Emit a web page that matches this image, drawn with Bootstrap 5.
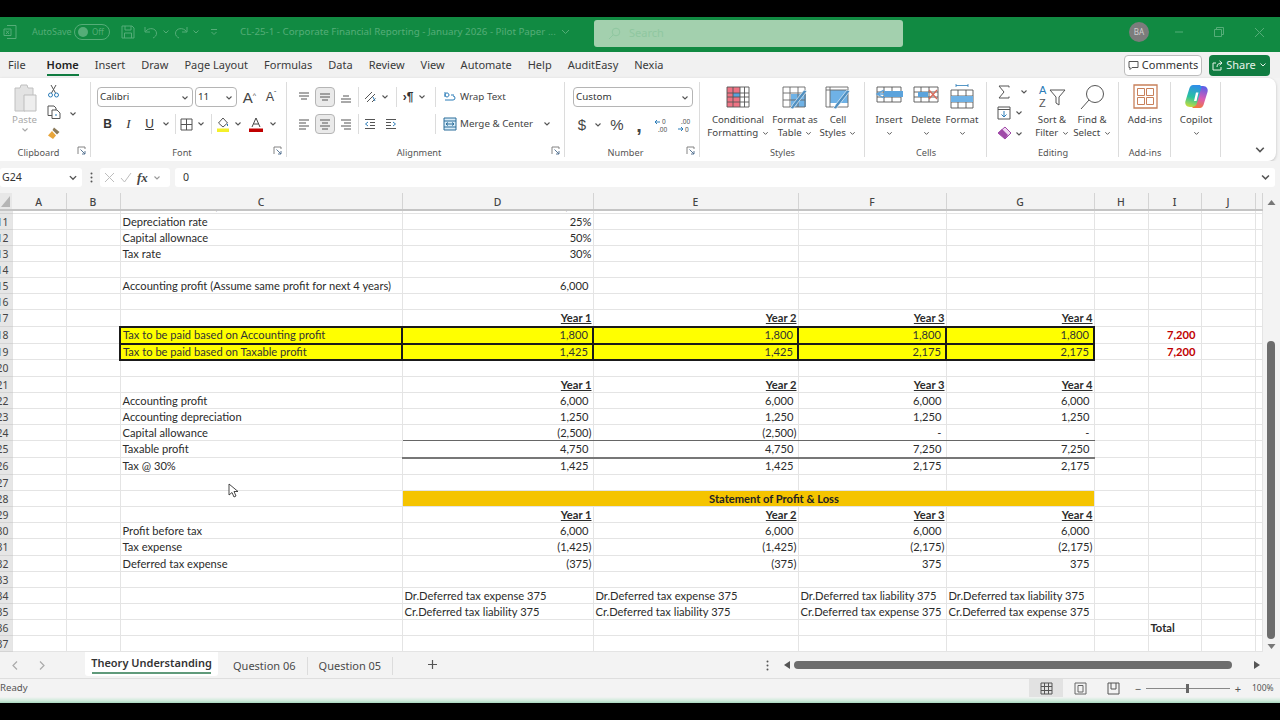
<!DOCTYPE html>
<html lang="en">
<head>
<meta charset="UTF-8">
<meta name="viewport" content="width=device-width, initial-scale=1.0">
<title>Corporate Financial Reporting - Excel</title>
<link href="https://cdn.jsdelivr.net/npm/bootstrap@5.3.3/dist/css/bootstrap.min.css" rel="stylesheet">
<style>
html, body { height: 720px; overflow: hidden; background: #000; }
body { font-family: "Noto Sans", "Liberation Sans", sans-serif; font-size: 11px; color: #333; }
.app { width: 1280px; height: 720px; display: flex; flex-direction: column; background: #f3f3f3; }
.topblack { height: 17px; background: #000; flex: none; }
.botblack { height: 17px; background: #000; flex: none; }
svg { display: block; }

/* title bar */
.titlebar { height: 35px; flex: none; background: #118a42; color: #55ad78; display: flex; align-items: center; padding-bottom: 5px; font-size: 10px; }
.tb-cell { display: flex; align-items: center; justify-content: center; flex: none; }
.tb-icon { width: 20px; margin-left: 0; }
.tb-auto { width: 35px; margin-left: 12px; font-size: 9px; white-space: nowrap; justify-content: flex-start; }
.toggle { width: 36px; height: 16px; margin-left: 7px; border: 1px solid #55ad78; border-radius: 9px; display: flex; align-items: center; gap: 4px; padding-left: 3px; font-size: 8px; flex: none; }
.toggle i { width: 10px; height: 10px; background: #55ad78; border-radius: 50%; display: block; }
.tb-save { width: 18px; margin-left: 9px; }
.tb-undo { width: 18px; margin-left: 5px; }
.tb-ch { width: 12px; }
.tb-redo { width: 18px; margin-left: 0; }
.tb-cust { width: 12px; margin-left: 6px; }
.tb-title { margin-left: 20px; width: 332px; font-size: 9.76px; white-space: nowrap; justify-content: flex-start; }
.searchbox { width: 309px; height: 27px; margin-left: 22px; margin-top: 2px; background: #a3d0ae; border-radius: 3px; display: flex; align-items: center; gap: 8px; padding-left: 14px; color: #8fc7a0; font-size: 11px; flex: none; }
.avatar { width: 20px; height: 20px; border-radius: 50%; background: #7c7c7c; color: #cfcfcf; font-size: 8px; display: flex; align-items: center; justify-content: center; margin-left: 226px; flex: none; }
.win { width: 40px; }
.win-first { margin-left: 10px; }

/* tabs */
.tabrow { height: 26px; flex: none; background: #f1f1f1; display: flex; align-items: center; padding-left: 8px; font-size: 11px; color: #3a3a3a; }
.tabrow .tabitem { margin-right: 16px; white-space: nowrap; }
.tabitem.on { font-weight: 600; color: #222; position: relative; }
.tabitem.on::after { content: ""; position: absolute; left: 0; right: 0; bottom: -3px; height: 2px; background: #107c41; }
.tabrow .tab-first { margin-right: 21px; }
.cmtbtn { margin-left: auto; height: 21px; width: 78px; background: #fff; border: 1px solid #bdbdbd; border-radius: 4px; display: flex; align-items: center; justify-content: center; gap: 3px; font-size: 11px; color: #333; }
.sharebtn { margin-left: 7px; margin-right: 10px; height: 21px; width: 61px; background: #107c41; border-radius: 4px; color: #e6f3ea; display: flex; align-items: center; justify-content: center; gap: 3px; font-size: 11px; }

/* ribbon */
.ribbon { height: 83px; flex: none; background: #fff; margin-right: 4px; border-radius: 0 8px 8px 0; box-shadow: 0 1px 3px rgba(0,0,0,.22); display: flex; color: #444; font-size: 9.7px; }
.rgroup { height: 100%; display: flex; flex-direction: column; flex: none; position: relative; }
.rgroup::after { content: ""; position: absolute; right: 0; top: 4px; bottom: 4px; width: 1px; background: #dcdcdc; }
.rbody { flex: 1; display: flex; min-height: 0; }
.rfoot { height: 15px; display: flex; align-items: flex-start; flex: none; font-size: 9.2px; color: #555; line-height: 13px; }
.rfoot span { flex: 1; text-align: center; }
.rfoot b { width: 14px; display: block; }
.g-clip { width: 91px; } .g-font { width: 196px; } .g-align { width: 278px; } .g-num { width: 135px; }
.g-style { width: 165px; } .g-cell { width: 122px; } .g-edit { width: 132px; } .g-add { width: 52px; } .g-copi { width: 50px; }
.g-rest { flex: 1; display: flex; align-items: flex-end; justify-content: flex-end; padding: 0 10px 5px 0; }
.smallcol { display: flex; flex-direction: column; padding-top: 9px; gap: 7px; }
.srow { display: grid; height: 20px; align-items: center; justify-items: center; }
.vsep { width: 1px; height: 20px; background: #dcdcdc; }
.selbox { height: 20px; border: 1px solid #b5b5b5; border-radius: 4px; background: #fff; display: flex; align-items: center; justify-content: space-between; padding: 1px 3px 0 2px; font-size: 9.8px; color: #333; width: 100%; }
.boxed { width: 20px; height: 20px; background: #eaeaea; border: 1px solid #b5b5b5; border-radius: 4px; display: flex; align-items: center; justify-content: center; }
.fr1 { grid-template-columns: 96px 2px 42px 6px 13px 9px 12px; }
.fr2 { grid-template-columns: 21px 21px 21px 12px 6px 16px 14px 6px 18px 12px 24px 10px; }
.ar1 { grid-template-columns: 21px 22px 20px 4px 20px 10px 12px 12px 16px 10px 20px auto; }
.ar2 { grid-template-columns: 21px 22px 20px 4px 20px 21px 29px 10px 20px 78px 18px; }
.nr1 { grid-template-columns: 120px; }
.nr2 { grid-template-columns: 18px 14px 24px 20px 25px 20px; }
.pad-font { padding-left: 6px; } .pad-num { padding-left: 8px; }
.txt-left { justify-self: start; white-space: nowrap; font-size: 9.8px; color: #444; padding-top: 1px; }
.glyph-b { font-weight: 700; font-family: "Liberation Sans", sans-serif; font-size: 12px; color: #333; }
.glyph-i { font-style: italic; font-family: "Liberation Serif", serif; font-size: 13px; color: #333; }
.glyph-u { text-decoration: underline; font-family: "Liberation Sans", sans-serif; font-size: 12px; color: #333; }
.glyph-aa { font-family: "Liberation Sans", sans-serif; font-size: 15px; color: #444; line-height: 1; white-space: nowrap; }
.glyph-aa sup { font-size: 7px; top: -.7em; }
.glyph-a2 { font-size: 12.5px; }
.glyph-sym { font-family: "Liberation Sans", sans-serif; font-size: 15px; color: #444; }
.glyph-cm { font-family: "Liberation Sans", sans-serif; font-size: 20px; font-weight: 700; color: #444; line-height: 10px; }
.bigbtn { display: flex; flex-direction: column; align-items: center; padding-top: 6px; white-space: nowrap; line-height: 13px; text-align: center; flex: none; }
.bigbtn .ic { height: 29px; display: flex; align-items: flex-start; justify-content: center; }
.b-cf, .b-ft, .b-cs { padding-top: 8px; }
.b-cf .ic, .b-ft .ic, .b-cs .ic { height: 27px; }
.b-cf { width: 76px; } .b-ft { width: 38px; } .b-cs { width: 48px; }
.b-ins { width: 48px; } .b-del { width: 26px; } .b-fmt { width: 46px; }
.b-sort { width: 32px; } .b-find { width: 48px; }
.b-add { width: 52px; } .b-cop { width: 50px; }
.paste { width: 46px; color: #a8a8a8; padding-left: 3px; }
.clipcol { display: flex; flex-direction: column; gap: 7px; padding-top: 6px; width: 15px; align-items: center; }
.editcol { width: 49px; display: grid; grid-template-columns: 34px 12px; grid-auto-rows: 21px; padding-top: 3px; align-items: center; justify-items: center; }
.ch-a { margin-left: -6px; }
.ch-b { margin-left: -16px; }
.chev-inline { display: inline-block; vertical-align: middle; margin-left: 1px; }

/* formula bar */
.fbar { height: 32px; flex: none; background: #f3f3f3; display: flex; align-items: flex-start; padding-top: 7px; font-size: 10.6px; color: #333; }
.namebox { width: 82px; height: 19px; background: #fff; border-radius: 3px; display: flex; align-items: center; justify-content: space-between; padding: 0 4px 0 2px; flex: none; }
.dots3 { width: 18px; height: 19px; display: flex; align-items: center; justify-content: center; flex: none; }
.fxbox { width: 70px; height: 19px; background: #fff; border-radius: 3px; display: flex; align-items: center; gap: 5px; padding-left: 4px; flex: none; }
.fx { font-family: "Liberation Serif", serif; font-style: italic; font-size: 13px; font-weight: 700; color: #444; }
.fxinput { width: 1100px; height: 19px; margin-left: 5px; background: #fff; border-radius: 3px; display: flex; align-items: center; justify-content: space-between; padding: 0 4px 0 8px; flex: none; }

/* sheet */
.sheetwrap { height: 459px; flex: none; display: flex; background: #f3f3f3; position: relative; overflow: hidden; }
.sheetgrid { table-layout: fixed; border-collapse: collapse; width: 1262px; background: #fff; font-family: "Lato", "Liberation Sans", sans-serif; font-size: 11.15px; color: #2b2b2b; flex: none; align-self: flex-start; }
.c-rh { width: 12px; } .c-ab { width: 54px; } .c-c { width: 282px; } .c-d { width: 191px; } .c-e { width: 205px; } .c-f { width: 148px; } .c-i { width: 53px; } .c-k { width: 7px; }
.sheetgrid th.ch { height: 16px; background: #f3f3f3; font-weight: 500; text-align: center; color: #444; border-right: 1px solid #d4d4d4; border-bottom: 2px solid #c4c4c4; padding: 2px 0 0; font-size: 10.4px; line-height: 13px; font-family: "Noto Sans", sans-serif; }
.sheetgrid th.corner { background: #e8e8e8; border-bottom: 2px solid #c4c4c4; padding: 0; }
.sheetgrid td { height: 16px; padding: 0 2px; border: 1px solid #e4e4e4; white-space: nowrap; overflow: hidden; line-height: 14px; }
.sheetgrid td.rh { background: #e6e6e6; direction: rtl; text-align: right; padding: 0 3px 0 0; border: 0; border-bottom: 1px solid #d4d4d4; font-family: "Noto Sans", sans-serif; font-size: 10.4px; color: #444; }
.sheetgrid tr.tall td { height: 17px; }
.sheetgrid tr.sliver td { height: 3px; padding: 0; line-height: 0; border-top: 0; }
.clipped { height: 2px; overflow: hidden; display: flex; align-items: flex-end; justify-content: flex-end; padding-right: 5px; line-height: 14px; }
.clipped-c { padding-right: 0; justify-content: flex-start; padding-left: 95px; }
.sheetgrid td.r { text-align: right; padding-right: 1px; }
.sheetgrid td.n { text-align: right; padding-right: 4px; }
.sheetgrid td.yr { text-align: right; font-weight: 700; text-decoration: underline; padding-right: 1px; }
.sheetgrid td.hl { background: #ffff00; border: 2px solid #1a1a1a; color: #333; }
.sheetgrid td.red { text-align: right; font-weight: 700; color: #c00000; padding-right: 5px; }
.sheetgrid td.u1 { border-bottom: 1px solid #666; }
.sheetgrid td.u2 { border-bottom: 2px solid #777; }
.sheetgrid td.bar28 { background: #f5c400; font-weight: 700; text-align: center; padding-left: 54px; color: #222; }
.totalcell { font-weight: 700; }
.vscroll { flex: 1; display: flex; flex-direction: column; align-items: center; padding-top: 6px; background: #f3f3f3; }
.vthumb { width: 8px; height: 298px; margin-top: 135px; background: #6d6d6d; border-radius: 4px; }
.vspace { flex: 1; }
.vscroll svg:last-child { margin-bottom: 2px; }
.cursor { position: absolute; left: 228px; top: 290px; }

/* sheet tabs */
.sheetbar { height: 27px; flex: none; background: #f3f3f3; border-bottom: 1px solid #dedede; display: flex; align-items: flex-start; font-size: 11px; color: #4a4a4a; }
.snav { width: 27px; height: 26px; display: flex; align-items: center; justify-content: center; flex: none; }
.snav-first { margin-left: 1px; }
.stab-on { margin-left: 30px; width: 133px; height: 24px; background: #fff; border-radius: 0 0 3px 3px; font-weight: 600; color: #333; display: flex; justify-content: center; position: relative; flex: none; padding-top: 3px; white-space: nowrap; }
.stab-on::after { content: ""; position: absolute; left: 7px; right: 7px; bottom: 2px; height: 2px; background: #5f9a7a; }
.stab { height: 18px; margin-top: 5px; padding: 0 11px 0 15px; border-right: 1px solid #dcdcdc; white-space: nowrap; line-height: 17px; flex: none; }
.stab-2 { padding-left: 11px; }
.addsheet { margin-left: 33px; margin-top: 6px; flex: none; }
.hdots { margin-left: 327px; margin-top: 8px; flex: none; }
.harrow { margin-top: 9px; flex: none; }
.harrow-l { margin-left: 15px; }
.hthumb { width: 438px; height: 8px; background: #6d6d6d; border-radius: 4px; margin: 9px 0 0 4px; flex: none; }
.harrow-r { margin-left: 22px; }

/* status */
.statusbar { height: 18px; flex: none; background: #f3f3f3; display: flex; align-items: center; font-size: 9.6px; color: #555; }
.viewbtn { width: 34px; height: 18px; display: flex; align-items: center; justify-content: center; flex: none; }
.viewbtn.on { background: #e2e2e2; margin-left: auto; }
.viewbtn.lastview { margin-right: 4px; width: 33px; }
.zoomtrack { width: 84px; height: 1px; background: #888; margin: 0 4px; position: relative; flex: none; }
.zoomtrack i { position: absolute; left: 40px; top: -4px; width: 3px; height: 9px; background: #666; display: block; }
.zoombtn { width: 8px; text-align: center; font-size: 11px; flex: none; line-height: 1; }
.zoompct { margin-left: 10px; margin-right: 8px; width: 20px; font-size: 8.5px; flex: none; white-space: nowrap; }
.tealline { height: 6px; flex: none; background: linear-gradient(#f3f3f3, #cfeadb 60%, #a9d8bf); }
</style>
</head>
<body>
<svg width="0" height="0" class="position-absolute">
  <defs>
    <symbol id="chev" viewBox="0 0 8 8"><path d="M1.5 2.5 4 5l2.5-2.5" fill="none" stroke="#555" stroke-width="1.1"/></symbol>
    <symbol id="launch" viewBox="0 0 9 9"><path d="M1 8V1h7v2" fill="none" stroke="#777" stroke-width=".9"/><path d="M3.5 3.5 8 8M5 8h3V5" fill="none" stroke="#4a6a8a" stroke-width=".9"/></symbol>
    <symbol id="lines-top" viewBox="0 0 14 14"><path d="M2 3h10M2 6h10M4 9h6" stroke="#555" stroke-width="1.1"/></symbol>
    <symbol id="lines-mid" viewBox="0 0 14 14"><path d="M2 4h10M2 7h10M4 10h6" stroke="#555" stroke-width="1.1"/></symbol>
    <symbol id="lines-bot" viewBox="0 0 14 14"><path d="M4 6h6M2 9h10M2 12h10" stroke="#555" stroke-width="1.1"/></symbol>
    <symbol id="al-left" viewBox="0 0 14 14"><path d="M2 3h10M2 6h7M2 9h10M2 12h7" stroke="#555" stroke-width="1.1"/></symbol>
    <symbol id="al-center" viewBox="0 0 14 14"><path d="M2 3h10M4 6h6M2 9h10M4 12h6" stroke="#555" stroke-width="1.1"/></symbol>
    <symbol id="al-right" viewBox="0 0 14 14"><path d="M2 3h10M5 6h7M2 9h10M5 12h7" stroke="#555" stroke-width="1.1"/></symbol>
  </defs>
</svg>
<div class="app">
  <div class="topblack"></div>

  <div class="titlebar">
    <div class="tb-cell tb-icon"><svg width="14" height="16" viewBox="0 0 14 16"><path d="M4 1.500h9v13H4M1 5h7v6.500H1z" fill="none" stroke="#55ad78"/><path d="M3 6.500l3 3.500M6 6.500l-3 3.500" stroke="#55ad78"/></svg></div>
    <div class="tb-cell tb-auto">AutoSave</div>
    <div class="toggle"><i></i>Off</div>
    <div class="tb-cell tb-save"><svg width="14" height="14" viewBox="0 0 14 14"><path d="M1 1h10l2 2v10H1zM4 1v4h6V1M3.500 13V8h7v5" fill="none" stroke="#55ad78"/></svg></div>
    <div class="tb-cell tb-undo"><svg width="14" height="14" viewBox="0 0 14 14"><path d="M1 2v5h5M1.500 6.500C5 2 12 3 12.500 8c.2 2.500-1.500 4-3.500 5" fill="none" stroke="#55ad78"/></svg></div>
    <div class="tb-cell tb-ch"><svg width="8" height="8"><path d="M1.500 2.500 4 5l2.500-2.500" fill="none" stroke="#55ad78"/></svg></div>
    <div class="tb-cell tb-redo"><svg width="14" height="14" viewBox="0 0 14 14"><path d="M13 2v5H8M12.500 6.500C9 2 2 3 1.500 8c-.2 2.500 1.500 4 3.500 5" fill="none" stroke="#55ad78"/></svg></div>
    <div class="tb-cell tb-ch"><svg width="8" height="8"><path d="M1.500 2.500 4 5l2.500-2.500" fill="none" stroke="#55ad78"/></svg></div>
    <div class="tb-cell tb-cust"><svg width="8" height="8"><path d="M1 1.500h6M1.500 4 4 6.500 6.500 4" fill="none" stroke="#55ad78"/></svg></div>
    <div class="tb-cell tb-title">CL-25-1 - Corporate Financial Reporting - January 2026 - Pilot Paper ...&nbsp;&nbsp;<svg width="9" height="9"><path d="M1 3l3.500 3.500L8 3" fill="none" stroke="#55ad78"/></svg></div>
    <div class="searchbox"><svg width="13" height="13" viewBox="0 0 13 13"><circle cx="8" cy="5" r="3.800" fill="none" stroke="#8fc7a0"/><path d="M5 8l-4 4" stroke="#8fc7a0"/></svg>Search</div>
    <div class="avatar">BA</div>
    <div class="tb-cell win win-first"><svg width="10" height="10"><path d="M1 5h8" stroke="#55ad78"/></svg></div>
    <div class="tb-cell win"><svg width="10" height="10"><path d="M.5 2.500h7v7h-7zM2.500 2.500v-2h7v7h-2" fill="none" stroke="#55ad78"/></svg></div>
    <div class="tb-cell win"><svg width="11" height="11"><path d="M1 1l9 9M10 1l-9 9" stroke="#55ad78"/></svg></div>
  </div>

  <div class="tabrow">
    <div class="tabitem tab-first">File</div>
    <div class="tabitem on">Home</div>
    <div class="tabitem">Insert</div>
    <div class="tabitem">Draw</div>
    <div class="tabitem">Page Layout</div>
    <div class="tabitem">Formulas</div>
    <div class="tabitem">Data</div>
    <div class="tabitem">Review</div>
    <div class="tabitem">View</div>
    <div class="tabitem">Automate</div>
    <div class="tabitem">Help</div>
    <div class="tabitem">AuditEasy</div>
    <div class="tabitem">Nexia</div>
    <div class="cmtbtn"><svg width="11" height="11" viewBox="0 0 11 11"><path d="M1 1.500h9v6H4L2 9.500v-2H1z" fill="none" stroke="#555"/></svg>Comments</div>
    <div class="sharebtn"><svg width="11" height="11" viewBox="0 0 11 11"><path d="M4 3H1v7h8V7M5 7c0-3 2-4 5-4M7.500 .8 10 3 7.500 5.200" fill="none" stroke="#e6f3ea"/></svg>Share<svg width="8" height="8"><path d="M1.500 2.500 4 5l2.500-2.500" fill="none" stroke="#e6f3ea"/></svg></div>
  </div>

  <div class="ribbon">
    <div class="rgroup g-clip">
      <div class="rbody">
        <div class="bigbtn paste">
          <div class="ic"><svg width="26" height="30" viewBox="0 0 26 30"><path d="M3 4h5l1-3h6l1 3h5v8h-8v15H3z" fill="#e3e3e3" stroke="#c0c0c0"/><path d="M12 11h12v16H12z" fill="#eee" stroke="#bdbdbd"/></svg></div>
          <div>Paste</div>
          <svg width="8" height="8"><use href="#chev" opacity=".5"/></svg>
        </div>
        <div class="clipcol">
          <svg width="13" height="14" viewBox="0 0 13 14"><path d="M4 1l4.500 8M9 1 4.500 9" stroke="#555" fill="none"/><circle cx="3.500" cy="11" r="2" fill="none" stroke="#2b7cb8"/><circle cx="9.500" cy="11" r="2" fill="none" stroke="#2b7cb8"/></svg>
          <svg width="14" height="14" viewBox="0 0 14 14"><path d="M5 10.500H1V1h6l2 2v2M5 5h5l3 3v5.500H5z" fill="#fff" stroke="#555"/><path d="M8 10h2" stroke="#2b7cb8"/></svg>
          <svg width="14" height="14" viewBox="0 0 14 14"><path d="M7 1.500 12.500 6 10 8.500 5.500 4z" fill="#8a7a5a"/><path d="M5 5 9 9.500 6 13 1 9.500z" fill="#e8a53a"/></svg>
        </div>
        <div class="ps-2 pt-4 mt-2"><svg width="8" height="8"><use href="#chev"/></svg></div>
      </div>
      <div class="rfoot"><span>Clipboard</span><b><svg width="9" height="9"><use href="#launch"/></svg></b></div>
    </div>

    <div class="rgroup g-font">
      <div class="rbody pad-font">
        <div class="smallcol">
          <div class="srow fr1">
            <div class="selbox"><span>Calibri</span><svg width="8" height="8"><use href="#chev"/></svg></div><i></i>
            <div class="selbox"><span>11</span><svg width="8" height="8"><use href="#chev"/></svg></div><i></i>
            <span class="glyph-aa">A<sup>^</sup></span><i></i>
            <span class="glyph-aa glyph-a2">A<sup>ˇ</sup></span>
          </div>
          <div class="srow fr2">
            <span class="glyph-b">B</span><span class="glyph-i">I</span><span class="glyph-u">U</span>
            <svg width="8" height="8"><use href="#chev"/></svg><span class="vsep"></span>
            <svg width="13" height="13" viewBox="0 0 13 13"><path d="M1 1h11v11H1zM6.500 1v11M1 6.500h11" fill="none" stroke="#555"/></svg>
            <svg width="8" height="8"><use href="#chev"/></svg><span class="vsep"></span>
            <svg width="14" height="15" viewBox="0 0 14 15"><path d="M7 1 2.500 6 7 10l4.500-4z" fill="none" stroke="#555"/><path d="M11.500 7v2" stroke="#2b7cb8"/><path d="M1 11.500h12V15H1z" fill="#f4f02a"/></svg>
            <svg width="8" height="8"><use href="#chev"/></svg>
            <svg width="14" height="15" viewBox="0 0 14 15"><path d="M3 10 7 1l4 9M4.500 7h5" fill="none" stroke="#444"/><path d="M0 11.500h14V15H0z" fill="#c00000"/></svg>
            <svg width="8" height="8"><use href="#chev"/></svg>
          </div>
        </div>
      </div>
      <div class="rfoot"><span>Font</span><b><svg width="9" height="9"><use href="#launch"/></svg></b></div>
    </div>

    <div class="rgroup g-align">
      <div class="rbody pad-font">
        <div class="smallcol">
          <div class="srow ar1">
            <svg width="14" height="14"><use href="#lines-top"/></svg>
            <span class="boxed"><svg width="14" height="14"><use href="#lines-mid"/></svg></span>
            <svg width="14" height="14"><use href="#lines-bot"/></svg>
            <span class="vsep"></span>
            <svg width="14" height="14" viewBox="0 0 14 14"><path d="M2 9 9 2M4 12l8-8M9 12l3.500-3.500" stroke="#555" fill="none"/><path d="M10 7l2 4" stroke="#2b7cb8"/></svg>
            <svg width="8" height="8"><use href="#chev"/></svg>
            <span class="vsep"></span>
            <span class="glyph-b">›¶</span>
            <svg width="8" height="8"><use href="#chev"/></svg>
            <span class="vsep"></span>
            <svg width="14" height="14" viewBox="0 0 14 14"><path d="M2 2v5M2 5a2 2 0 1 0 0-.1M8 5h3M2 10h8a2 2 0 0 0 0-4" fill="none" stroke="#2b7cb8"/></svg>
            <span class="txt-left">Wrap Text</span>
          </div>
          <div class="srow ar2">
            <svg width="14" height="14"><use href="#al-left"/></svg>
            <span class="boxed"><svg width="14" height="14"><use href="#al-center"/></svg></span>
            <svg width="14" height="14"><use href="#al-right"/></svg>
            <span class="vsep"></span>
            <svg width="14" height="14" viewBox="0 0 14 14"><path d="M2 2.500h10M2 11.500h10M7 5.500h5M7 8.500h5" stroke="#555"/><path d="M5 5 2.500 7 5 9" stroke="#2b7cb8" fill="none"/></svg>
            <svg width="14" height="14" viewBox="0 0 14 14"><path d="M2 2.500h10M2 11.500h10M2 5.500h5M2 8.500h5" stroke="#555"/><path d="M9 5l2.500 2L9 9" stroke="#2b7cb8" fill="none"/></svg>
            <i></i>
            <span class="vsep"></span>
            <svg width="14" height="14" viewBox="0 0 14 14"><path d="M1 1h12v12H1z" fill="#d8ecf8" stroke="#2b6d99"/><path d="M1 4h12M1 10h12M3 7h8M3 7l2-1.500M3 7l2 1.500M11 7 9 5.500M11 7 9 8.500" fill="none" stroke="#2b6d99"/></svg>
            <span class="txt-left">Merge &amp; Center</span>
            <svg width="8" height="8"><use href="#chev"/></svg>
          </div>
        </div>
      </div>
      <div class="rfoot"><span>Alignment</span><b><svg width="9" height="9"><use href="#launch"/></svg></b></div>
    </div>

    <div class="rgroup g-num">
      <div class="rbody pad-num">
        <div class="smallcol">
          <div class="srow nr1"><div class="selbox"><span>Custom</span><svg width="8" height="8"><use href="#chev"/></svg></div></div>
          <div class="srow nr2">
            <span class="glyph-sym">$</span><svg width="8" height="8"><use href="#chev"/></svg><span class="glyph-sym">%</span><span class="glyph-cm">,</span>
            <svg width="17" height="15" viewBox="0 0 17 15"><path d="M7 4H2m2-2L2 4l2 2" fill="none" stroke="#2b7cb8"/><text x="9" y="6" font-size="6.500" fill="#555">0</text><text x="5" y="14" font-size="6.500" fill="#555">.00</text></svg>
            <svg width="17" height="15" viewBox="0 0 17 15"><text x="5" y="6" font-size="6.500" fill="#555">.00</text><path d="M2 11h5M5 9l2 2-2 2" fill="none" stroke="#2b7cb8"/><text x="9" y="14" font-size="6.500" fill="#555">0</text></svg>
          </div>
        </div>
      </div>
      <div class="rfoot"><span>Number</span><b><svg width="9" height="9"><use href="#launch"/></svg></b></div>
    </div>

    <div class="rgroup g-style">
      <div class="rbody">
        <div class="bigbtn b-cf">
          <div class="ic"><svg width="24" height="22" viewBox="0 0 24 22"><path d="M1 1h13v6H7v4h7v10H1z" fill="#ee7384"/><path d="M7 7h7v4H7z" fill="#5ba3dc"/><path d="M1 1h22v20H1zM1 7h22M1 11h22M1 16h22M7 1v20M14 1v20M18.500 1v20" fill="none" stroke="#555" stroke-width=".9"/></svg></div>
          <div>Conditional</div><div>Formatting <svg class="chev-inline" width="7" height="7" viewBox="0 0 8 8"><use href="#chev"/></svg></div>
        </div>
        <div class="bigbtn b-ft">
          <div class="ic"><svg width="26" height="24" viewBox="0 0 26 24"><path d="M9 8h15v13H9z" fill="#6fb2e6"/><path d="M1 1h22v20H1zM1 7h22M1 14h22M8 1v20M16 1v20" fill="none" stroke="#666" stroke-width=".9"/><path d="M25 5 14 19l-3 4-3-1c2-1 2-3 3-4L22 4z" fill="#4f8fc0" stroke="#fff" stroke-width=".6"/></svg></div>
          <div>Format as</div><div>Table <svg class="chev-inline" width="7" height="7" viewBox="0 0 8 8"><use href="#chev"/></svg></div>
        </div>
        <div class="bigbtn b-cs">
          <div class="ic"><svg width="26" height="24" viewBox="0 0 26 24"><path d="M5 4h18v13H5z" fill="#6fb2e6"/><path d="M1 1h22v20H1zM1 4h22M5 1v20" fill="none" stroke="#666" stroke-width=".9"/><path d="M25 5 14 19l-3 4-3-1c2-1 2-3 3-4L22 4z" fill="#4f8fc0" stroke="#fff" stroke-width=".6"/></svg></div>
          <div>Cell</div><div>Styles <svg class="chev-inline" width="7" height="7" viewBox="0 0 8 8"><use href="#chev"/></svg></div>
        </div>
      </div>
      <div class="rfoot"><span>Styles</span></div>
    </div>

    <div class="rgroup g-cell">
      <div class="rbody">
        <div class="bigbtn b-ins">
          <div class="ic"><svg width="28" height="22" viewBox="0 0 28 22"><path d="M2 3h24v15H2zM2 8h24M2 13h24M9 3v15M17 3v15" fill="none" stroke="#555" stroke-width=".9"/><path d="M9 7h19v6H9z" fill="#5ba3dc"/><path d="M9 6 2 10l7 4M2 10h10" fill="none" stroke="#5ba3dc" stroke-width="1.400"/></svg></div>
          <div>Insert</div><svg class="mt-1" width="7" height="7" viewBox="0 0 8 8"><use href="#chev"/></svg>
        </div>
        <div class="bigbtn b-del">
          <div class="ic"><svg width="26" height="22" viewBox="0 0 26 22"><path d="M1 3h24v15H1zM1 8h24M1 13h24M8 3v15M16 3v15" fill="none" stroke="#555" stroke-width=".9"/><path d="M5 8h10v5H5z" fill="#5ba3dc"/><path d="M16 6l8 9M24 6l-8 9" stroke="#d96a5a" stroke-width="1.300"/></svg></div>
          <div>Delete</div><svg class="mt-1" width="7" height="7" viewBox="0 0 8 8"><use href="#chev"/></svg>
        </div>
        <div class="bigbtn b-fmt">
          <div class="ic"><svg width="24" height="26" viewBox="0 0 24 26"><path d="M1 6h22v18H1zM1 12h22M1 18h22M8 6v18M16 6v18" fill="none" stroke="#555" stroke-width=".9"/><path d="M8 12h8v6H8z M1 12h7v6H1z M16 12h7v6h-7z" fill="#6fb2e6"/><path d="M6 1.500h12M6 0v3M18 0v3" stroke="#2b7cb8" stroke-width=".8"/></svg></div>
          <div>Format</div><svg class="mt-1" width="7" height="7" viewBox="0 0 8 8"><use href="#chev"/></svg>
        </div>
      </div>
      <div class="rfoot"><span>Cells</span></div>
    </div>

    <div class="rgroup g-edit">
      <div class="rbody">
        <div class="editcol">
          <svg width="14" height="14" viewBox="0 0 14 14"><path d="M12 2.500V1H2l5 6-5 6h10v-1.500" fill="none" stroke="#555"/></svg><svg class="ch-a" width="8" height="8"><use href="#chev"/></svg>
          <svg width="14" height="14" viewBox="0 0 14 14"><path d="M1 1h12v12H1zM1 3.500h12" fill="none" stroke="#555"/><path d="M7 5v6M4.500 8.500 7 11l2.500-2.500" fill="none" stroke="#2b7cb8"/></svg><svg class="ch-b" width="8" height="8"><use href="#chev"/></svg>
          <svg width="15" height="15" viewBox="0 0 15 15"><path d="M8 1l6 6-6 6-7-6z" fill="#f0d7f2" stroke="#a04aa8"/><path d="M1 7l4-4 6 6-3 4z" fill="#a04aa8"/></svg><svg class="ch-b" width="8" height="8"><use href="#chev"/></svg>
        </div>
        <div class="bigbtn b-sort">
          <div class="ic"><svg width="28" height="26" viewBox="0 0 28 26"><text x="1" y="10" font-size="11" fill="#2b7cb8" font-family="Liberation Sans">A</text><text x="1" y="23" font-size="11" fill="#555" font-family="Liberation Sans">Z</text><path d="M12 6h15l-6 7v8l-3-2v-6z" fill="none" stroke="#555"/></svg></div>
          <div>Sort &amp;</div><div>Filter <svg class="chev-inline" width="7" height="7" viewBox="0 0 8 8"><use href="#chev"/></svg></div>
        </div>
        <div class="bigbtn b-find">
          <div class="ic"><svg width="26" height="27" viewBox="0 0 26 27"><circle cx="16" cy="10" r="8.500" fill="none" stroke="#555"/><path d="M10 16 2 25" stroke="#555"/></svg></div>
          <div>Find &amp;</div><div>Select <svg class="chev-inline" width="7" height="7" viewBox="0 0 8 8"><use href="#chev"/></svg></div>
        </div>
      </div>
      <div class="rfoot"><span>Editing</span></div>
    </div>

    <div class="rgroup g-add">
      <div class="rbody">
        <div class="bigbtn b-add">
          <div class="ic"><svg width="25" height="25" viewBox="0 0 25 25"><path d="M1 1h23v23H1z" fill="none" stroke="#c8805a" stroke-width="1.300"/><path d="M4.500 4.500h7v7h-7zM13.500 4.500h7v7h-7zM4.500 13.500h7v7h-7zM13.500 13.500h7v7h-7z" fill="none" stroke="#c8805a"/></svg></div>
          <div>Add-ins</div>
        </div>
      </div>
      <div class="rfoot"><span>Add-ins</span></div>
    </div>

    <div class="rgroup g-copi">
      <div class="rbody">
        <div class="bigbtn b-cop">
          <div class="ic"><svg width="25" height="25" viewBox="0 0 25 25">
            <defs>
              <linearGradient id="cp1" x1="0.500" y1="0" x2="0.300" y2="1"><stop offset="0" stop-color="#2f8ee8"/><stop offset=".55" stop-color="#27c2a0"/><stop offset="1" stop-color="#c6dc3c"/></linearGradient>
              <linearGradient id="cp2" x1="0.600" y1="0" x2="0.400" y2="1"><stop offset="0" stop-color="#5a5fe8"/><stop offset=".55" stop-color="#d95bb5"/><stop offset="1" stop-color="#f2783a"/></linearGradient>
            </defs>
            <path d="M16 24h-6c-1 0-2-.5-2.500-2L12 6c.7-2.500 2.500-4 5-4h2c3.500 0 5.500 3 4.500 6L19.500 21c-.8 2-2 3-3.500 3z" fill="url(#cp2)"/>
            <path d="M9 1h6c1 0 2 .5 2.500 2L13 19c-.7 2.500-2.500 4-5 4H6c-3.500 0-5.500-3-4.500-6L5.500 4C6.300 2 7.500 1 9 1z" fill="url(#cp1)"/>
            <path d="M12 8.500h2.500L12.500 17H10z" fill="#fff"/></svg></div>
          <div>Copilot</div>
          <svg class="mt-1" width="7" height="7" viewBox="0 0 8 8"><use href="#chev"/></svg>
        </div>
      </div>
      <div class="rfoot"></div>
    </div>

    <div class="g-rest"><svg width="12" height="12" viewBox="0 0 8 8"><use href="#chev"/></svg></div>
  </div>

  <div class="fbar">
    <div class="namebox"><span>G24</span><svg width="10" height="10" viewBox="0 0 8 8"><use href="#chev"/></svg></div>
    <div class="dots3"><svg width="3" height="11"><circle cx="1.500" cy="1.500" r="1" fill="#555"/><circle cx="1.500" cy="5.500" r="1" fill="#555"/><circle cx="1.500" cy="9.500" r="1" fill="#555"/></svg></div>
    <div class="fxbox">
      <svg width="11" height="11"><path d="M1 1l9 9M10 1l-9 9" stroke="#bdbdbd"/></svg>
      <svg width="12" height="11"><path d="M1 6l3.500 4L11 1" fill="none" stroke="#bdbdbd"/></svg>
      <span class="fx">fx</span>
      <svg width="8" height="8"><use href="#chev" opacity=".6"/></svg>
    </div>
    <div class="fxinput"><span>0</span><svg width="11" height="11" viewBox="0 0 8 8"><use href="#chev"/></svg></div>
  </div>

  <div class="sheetwrap">
    <table class="sheetgrid">
      <colgroup>
        <col class="c-rh"><col class="c-ab"><col class="c-ab"><col class="c-c"><col class="c-d"><col class="c-e"><col class="c-f"><col class="c-f"><col class="c-ab"><col class="c-i"><col class="c-ab"><col class="c-k">
      </colgroup>
      <thead>
        <tr><th class="corner"><svg width="12" height="16" viewBox="0 0 12 16"><path d="M10 3v11H1z" fill="#b5b5b5"/></svg></th><th class="ch">A</th><th class="ch">B</th><th class="ch">C</th><th class="ch">D</th><th class="ch">E</th><th class="ch">F</th><th class="ch">G</th><th class="ch">H</th><th class="ch">I</th><th class="ch">J</th><th class="ch"></th></tr>
      </thead>
      <tbody>
        <tr class="sliver"><td class="rh"><td><td><td><div class="clipped clipped-c">,</div><td><div class="clipped">5,000</div><td><td><td><td><td><td><td></tr>
        <tr><td class="rh">11<td><td><td>Depreciation rate<td class="r">25%<td><td><td><td><td><td><td></tr>
        <tr><td class="rh">12<td><td><td>Capital allownace<td class="r">50%<td><td><td><td><td><td><td></tr>
        <tr><td class="rh">13<td><td><td>Tax rate<td class="r">30%<td><td><td><td><td><td><td></tr>
        <tr><td class="rh">14<td><td><td><td><td><td><td><td><td><td><td></tr>
        <tr><td class="rh">15<td><td><td>Accounting profit (Assume same profit for next 4 years)<td class="n">6,000<td><td><td><td><td><td><td></tr>
        <tr><td class="rh">16<td><td><td><td><td><td><td><td><td><td><td></tr>
        <tr class="tall"><td class="rh">17<td><td><td><td class="yr">Year 1<td class="yr">Year 2<td class="yr">Year 3<td class="yr">Year 4<td><td><td><td></tr>
        <tr class="tall"><td class="rh">18<td><td><td class="hl">Tax to be paid based on Accounting profit<td class="hl n">1,800<td class="hl n">1,800<td class="hl n">1,800<td class="hl n">1,800<td><td class="red">7,200<td><td></tr>
        <tr><td class="rh">19<td><td><td class="hl">Tax to be paid based on Taxable profit<td class="hl n">1,425<td class="hl n">1,425<td class="hl n">2,175<td class="hl n">2,175<td><td class="red">7,200<td><td></tr>
        <tr class="tall"><td class="rh">20<td><td><td><td><td><td><td><td><td><td><td></tr>
        <tr><td class="rh">21<td><td><td><td class="yr">Year 1<td class="yr">Year 2<td class="yr">Year 3<td class="yr">Year 4<td><td><td><td></tr>
        <tr><td class="rh">22<td><td><td>Accounting profit<td class="n">6,000<td class="n">6,000<td class="n">6,000<td class="n">6,000<td><td><td><td></tr>
        <tr><td class="rh">23<td><td><td>Accounting depreciation<td class="n">1,250<td class="n">1,250<td class="n">1,250<td class="n">1,250<td><td><td><td></tr>
        <tr><td class="rh">24<td><td><td>Capital allowance<td class="r u1">(2,500)<td class="r u1">(2,500)<td class="n u1">-<td class="n u1">-<td><td><td><td></tr>
        <tr class="tall"><td class="rh">25<td><td><td>Taxable profit<td class="n u2">4,750<td class="n u2">4,750<td class="n u2">7,250<td class="n u2">7,250<td><td><td><td></tr>
        <tr class="tall"><td class="rh">26<td><td><td>Tax @ 30%<td class="n">1,425<td class="n">1,425<td class="n">2,175<td class="n">2,175<td><td><td><td></tr>
        <tr><td class="rh">27<td><td><td><td><td><td><td><td><td><td><td></tr>
        <tr><td class="rh">28<td><td><td><td class="bar28" colspan="4">Statement of Profit &amp; Loss<td><td><td><td></tr>
        <tr><td class="rh">29<td><td><td><td class="yr">Year 1<td class="yr">Year 2<td class="yr">Year 3<td class="yr">Year 4<td><td><td><td></tr>
        <tr><td class="rh">30<td><td><td>Profit before tax<td class="n">6,000<td class="n">6,000<td class="n">6,000<td class="n">6,000<td><td><td><td></tr>
        <tr class="tall"><td class="rh">31<td><td><td>Tax expense<td class="r">(1,425)<td class="r">(1,425)<td class="r">(2,175)<td class="r">(2,175)<td><td><td><td></tr>
        <tr><td class="rh">32<td><td><td>Deferred tax expense<td class="r">(375)<td class="r">(375)<td class="n">375<td class="n">375<td><td><td><td></tr>
        <tr><td class="rh">33<td><td><td><td><td><td><td><td><td><td><td></tr>
        <tr><td class="rh">34<td><td><td><td>Dr.Deferred tax expense 375<td>Dr.Deferred tax expense 375<td>Dr.Deferred tax liability 375<td>Dr.Deferred tax liability 375<td><td><td><td></tr>
        <tr><td class="rh">35<td><td><td><td>Cr.Deferred tax liability 375<td>Cr.Deferred tax liability 375<td>Cr.Deferred tax expense 375<td>Cr.Deferred tax expense 375<td><td><td><td></tr>
        <tr><td class="rh">36<td><td><td><td><td><td><td><td><td class="totalcell">Total<td><td><td></tr>
        <tr><td class="rh">37<td><td><td><td><td><td><td><td><td><td><td></tr>
      </tbody>
    </table>
    <div class="vscroll">
      <svg width="9" height="7"><path d="M4.500 1 8.500 6h-8z" fill="#777"/></svg>
      <div class="vthumb"></div>
      <div class="vspace"></div>
      <svg width="9" height="7"><path d="M4.500 6 8.500 1h-8z" fill="#777"/></svg>
    </div>
    <svg class="cursor" width="11" height="15" viewBox="0 0 11 15"><path d="M1 1v11l3-2.500 2 4.500 2-1-2-4.500h4z" fill="#fff" stroke="#333" stroke-width=".9"/></svg>
  </div>

  <div class="sheetbar">
    <div class="snav snav-first"><svg width="8" height="11"><path d="M6 1.500 2 5.500l4 4" fill="none" stroke="#aaa" stroke-width="1.200"/></svg></div>
    <div class="snav"><svg width="8" height="11"><path d="M2 1.500l4 4-4 4" fill="none" stroke="#aaa" stroke-width="1.200"/></svg></div>
    <div class="stab-on">Theory Understanding</div>
    <div class="stab">Question 06</div>
    <div class="stab stab-2">Question 05</div>
    <svg class="addsheet" width="13" height="13"><path d="M6.500 2v9M2 6.500h9" stroke="#555" stroke-width="1.200"/></svg>
    <svg class="hdots" width="3" height="11"><circle cx="1.500" cy="1.500" r="1" fill="#555"/><circle cx="1.500" cy="5.500" r="1" fill="#555"/><circle cx="1.500" cy="9.500" r="1" fill="#555"/></svg>
    <svg class="harrow harrow-l" width="6" height="8"><path d="M6 0v8L0 4z" fill="#555"/></svg>
    <div class="hthumb"></div>
    <svg class="harrow harrow-r" width="6" height="8"><path d="M0 0v8l6-4z" fill="#555"/></svg>
  </div>

  <div class="statusbar">
    <span>Ready</span>
    <div class="viewbtn on"><svg width="13" height="13" viewBox="0 0 13 13"><path d="M1 1h11v11H1zM1 4.500h11M1 8.500h11M4.500 1v11M8.500 1v11" fill="none" stroke="#555"/></svg></div>
    <div class="viewbtn"><svg width="13" height="13" viewBox="0 0 13 13"><path d="M1 1h11v11H1zM4 3.500h5v6.500H4z" fill="none" stroke="#666"/></svg></div>
    <div class="viewbtn lastview"><svg width="13" height="13" viewBox="0 0 13 13"><path d="M1 1h11v11H1zM4 1v6h5V1" fill="none" stroke="#555"/></svg></div>
    <span class="zoombtn">−</span>
    <div class="zoomtrack"><i></i></div>
    <span class="zoombtn">+</span>
    <span class="zoompct">100%</span>
  </div>
  <div class="tealline"></div>
  <div class="botblack"></div>
</div>
</body>
</html>
